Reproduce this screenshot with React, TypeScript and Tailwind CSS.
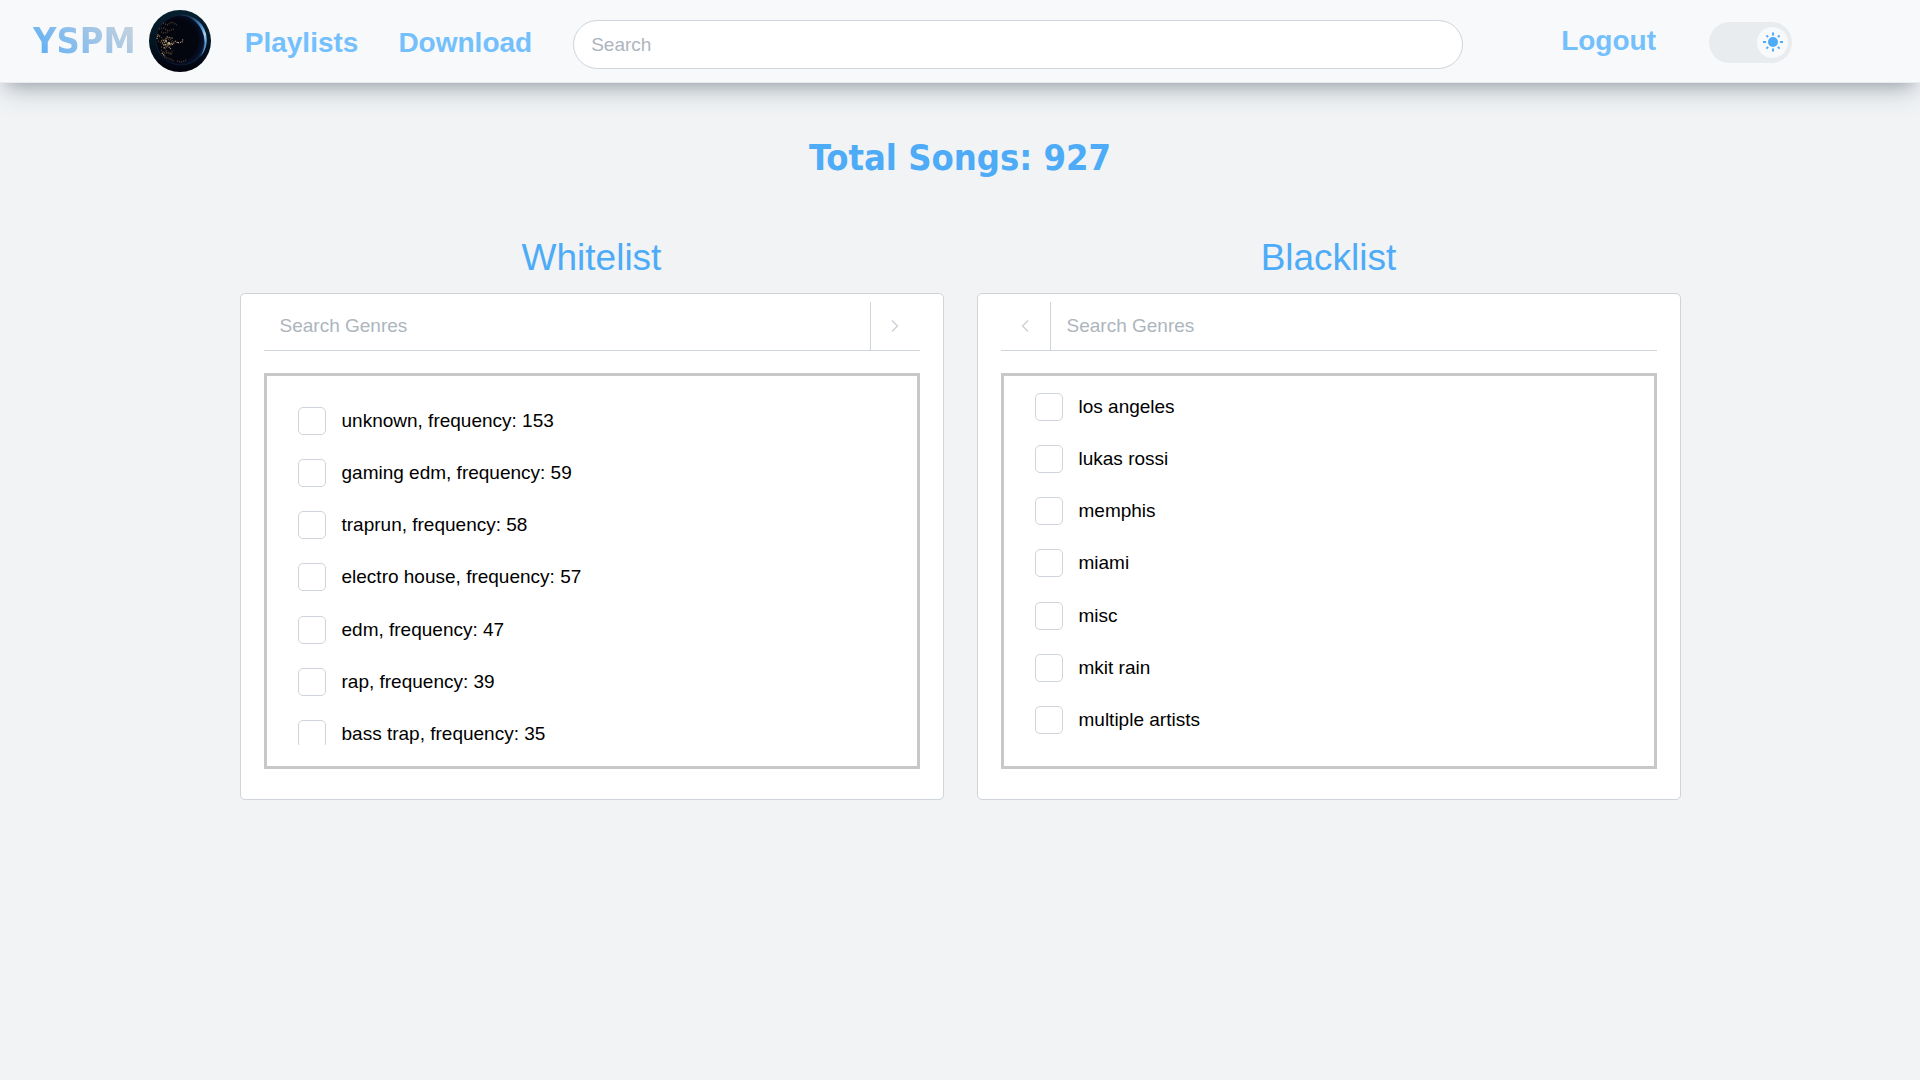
type PanelProps = {
  title: string;
  id: string;
  items: string[];
  arrow: 'left' | 'right';
  offset: string;
};

const whitelist = [
  'unknown, frequency: 153',
  'gaming edm, frequency: 59',
  'traprun, frequency: 58',
  'electro house, frequency: 57',
  'edm, frequency: 47',
  'rap, frequency: 39',
  'bass trap, frequency: 35',
];

const blacklist = ['los angeles', 'lukas rossi', 'memphis', 'miami', 'misc', 'mkit rain', 'multiple artists'];

function Globe() {
  return (
    <svg viewBox="0 0 62 62" className="size-[62px] shrink-0" role="img" aria-label="Earth at night">
      <defs>
        <linearGradient id="space" x1="0" y1="0" x2="0" y2="1">
          <stop offset="0" stopColor="#06202f" />
          <stop offset="0.55" stopColor="#031320" />
          <stop offset="1" stopColor="#01020d" />
        </linearGradient>
        <linearGradient id="rim" x1="0.3" y1="0.1" x2="1" y2="0.6">
          <stop offset="0" stopColor="#2b4a6b" stopOpacity="0.5" />
          <stop offset="0.6" stopColor="#4f8fce" />
          <stop offset="0.85" stopColor="#a5d4f5" />
          <stop offset="1" stopColor="#5b95cd" />
        </linearGradient>
        <radialGradient id="night" cx="0.42" cy="0.5" r="0.58">
          <stop offset="0.7" stopColor="#03050f" />
          <stop offset="0.9" stopColor="#06112a" />
          <stop offset="1" stopColor="#1a3f68" />
        </radialGradient>
        <filter id="soft" x="-20%" y="-20%" width="140%" height="140%">
          <feGaussianBlur stdDeviation="0.4" />
        </filter>
      </defs>
      <circle cx="31" cy="31" r="31" fill="url(#space)" />
      <circle cx="32" cy="30" r="25" fill="url(#night)" stroke="#12283c" strokeWidth="0.6" />
      <path d="M30 5a25 25 0 0 1 21 42a27 27 0 0 0-21-42z" fill="url(#rim)" filter="url(#soft)" />
      <g fill="none" stroke="#5a4832" strokeWidth="1.6" strokeDasharray="1 1.2" opacity="0.85">
        <path d="M14 13l4 2 5-3 5 3" />
        <path d="M10 19l5-1 4 3 6-2" />
        <path d="M12 22l3 1 4-1" />
        <path d="M8 26l4 1 3 4 5-2 5 3" />
        <path d="M9 31l5 3 5 1 4-3" />
        <path d="M12 37l4 1 2 5 4 1 2-4" />
        <path d="M12 40l3 3 4-1 4 2" />
        <path d="M13 43l3 4 5 2 4 2" />
        <path d="M28 51l5 1 4-2" />
      </g>
      <g fill="none" stroke="#c9ab78" strokeWidth="1.2" strokeDasharray="0.9 1">
        <path d="M8 29l1-4 2 1" />
        <path d="M12 31l4-1 2-3 4 1" />
        <path d="M13 33l4-1 3 2 4-1" />
        <path d="M14 35l5-1 4 1 3-3" />
        <path d="M15 38l4-2 3 3" />
        <path d="M26 31l3 2 4-1 1-3" />
        <path d="M13 43l3 3" />
      </g>
      <g fill="#f3dfb0">
        <circle cx="17" cy="31" r="0.8" />
        <circle cx="20" cy="33" r="0.9" />
        <circle cx="23" cy="28" r="0.6" />
        <circle cx="16" cy="35" r="0.6" />
        <circle cx="29" cy="32.5" r="0.6" />
      </g>
    </svg>
  );
}

function Sun() {
  return (
    <svg viewBox="0 0 24 24" className="size-6" stroke="#4dabf7" strokeWidth="2" aria-hidden="true">
      <circle cx="12" cy="12" r="5" fill="#4dabf7" stroke="none" />
      <path d="M2 12h3M19 12h3M12 2.500v3M12 18.500v3M5.400 5.400l1.700 1.700M16.900 16.900l1.700 1.700M5.400 18.600l1.700-1.700M16.900 7.100l1.700-1.700" />
    </svg>
  );
}

function MoveButton({ arrow }: { arrow: 'left' | 'right' }) {
  const isRight = arrow === 'right';
  return (
    <button
      type="button"
      aria-label={isRight ? 'Move to blacklist' : 'Move to whitelist'}
      className={`flex w-[50px] shrink-0 items-center justify-center text-[#ced4da] ${
        isRight ? 'border-l border-[#ced4da]' : 'border-r border-[#ced4da]'
      }`}
    >
      <svg
        viewBox="0 0 24 24"
        className="size-5"
        fill="none"
        stroke="currentColor"
        strokeWidth="2"
        strokeLinecap="round"
        strokeLinejoin="round"
        aria-hidden="true"
      >
        <path d={isRight ? 'M9 6l6 6-6 6' : 'M15 6l-6 6 6 6'} />
      </svg>
    </button>
  );
}

function Panel({ title, id, items, arrow, offset }: PanelProps) {
  return (
    <section className="min-w-0">
      <h2 className="text-center text-[37px] leading-[44px] text-[#4dabf7]">{title}</h2>
      <div className="mt-[13px] rounded-[5px] border border-[#ced4da] bg-white px-[23px] pt-2 pb-[30px]">
        <div className="flex h-[49px] border-b border-[#ced4da]">
          {arrow === 'left' && <MoveButton arrow="left" />}
          <input
            type="text"
            aria-label={`Search ${title} genres`}
            placeholder="Search Genres"
            className="min-w-0 flex-1 bg-transparent px-4 text-[19px] outline-none placeholder:text-[#adb5bd]"
          />
          {arrow === 'right' && <MoveButton arrow="right" />}
        </div>
        <div className="mt-[22px] border-3 border-[#c8c8c8] pb-[21px]">
          <div className={`h-[369px] overflow-hidden px-[31px] ${offset}`}>
            <ul className="flex h-[341px] flex-col justify-between">
              {items.map((item, i) => (
                <li key={item} className="flex h-7 shrink-0 items-center gap-4">
                  <input
                    id={`${id}-${i}`}
                    type="checkbox"
                    className="size-7 shrink-0 appearance-none rounded-[5px] border border-[#ced4da] bg-white checked:border-[#4dabf7] checked:bg-[#4dabf7]"
                  />
                  <label htmlFor={`${id}-${i}`} className="text-[19px] leading-7 text-black">
                    {item}
                  </label>
                </li>
              ))}
            </ul>
          </div>
        </div>
      </div>
    </section>
  );
}

export default function App() {
  return (
    <div className="min-h-screen bg-[#f1f3f5] font-['Liberation_Sans',Arial,sans-serif]">
      <header className="flex h-[83px] items-center border-b border-[#e9ecef] bg-[#f8f9fa] pr-32 pl-[33px] shadow-[0_13px_27px_-5px_rgba(60,80,95,0.25),0_8px_16px_-8px_rgba(20,30,40,0.3)]">
        <span className="bg-linear-45 from-[#4dabf7] to-[#ced4da] bg-clip-text font-['DejaVu_Sans_Condensed',Tahoma,sans-serif] text-[36px] leading-[44px] font-bold text-transparent">
          YSPM
        </span>
        <span className="ml-[13px]">
          <Globe />
        </span>
        <nav className="ml-[34px] flex gap-10 pt-1 text-[28px] leading-8 font-bold text-[#74c0fc]">
          <a href="#playlists">Playlists</a>
          <a href="#download">Download</a>
        </nav>
        <div className="ml-[41px] flex min-w-0 flex-1 pt-[7px]">
          <input
            type="search"
            aria-label="Search"
            placeholder="Search"
            className="h-[49px] w-full rounded-full border border-[#ced4da] bg-white px-[17px] text-[19px] outline-none placeholder:text-[#adb5bd]"
          />
        </div>
        <a href="#logout" className="ml-[98px] text-[28px] leading-8 font-bold text-[#74c0fc]">
          Logout
        </a>
        <div className="ml-[53px] pt-0.5">
          <label className="flex h-[41px] w-[83px] cursor-pointer items-center justify-end rounded-full bg-[#e9ecef] pr-1">
            <input type="checkbox" role="switch" aria-label="Light theme" defaultChecked className="sr-only" />
            <span className="flex size-[31px] items-center justify-center rounded-full bg-[#f8f9fa]">
              <Sun />
            </span>
          </label>
        </div>
      </header>
      <main className="mx-auto max-w-[1441px] pt-[53px]">
        <h1 className="text-center font-['DejaVu_Sans_Condensed',Tahoma,sans-serif] text-[36px] leading-[44px] font-bold text-[#4dabf7]">
          Total Songs: 927
        </h1>
        <div className="mt-14 grid grid-cols-2 gap-[33px]">
          <Panel title="Whitelist" id="whitelist" items={whitelist} arrow="right" offset="pt-[31px]" />
          <Panel title="Blacklist" id="blacklist" items={blacklist} arrow="left" offset="pt-[17px]" />
        </div>
      </main>
    </div>
  );
}
